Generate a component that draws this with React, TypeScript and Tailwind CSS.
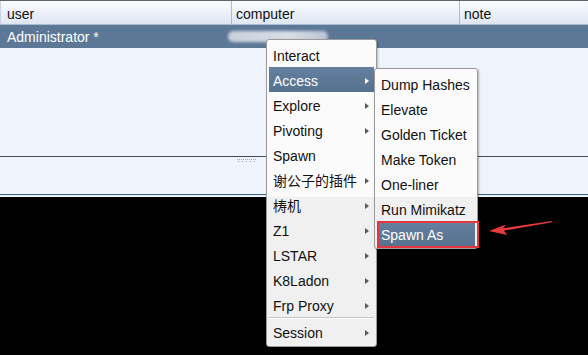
import React from "react";

const Arrow = ({ light }: { light?: boolean }) => (
  <span
    className={
      "ml-auto mr-[5px] h-0 w-0 border-y-[3px] border-l-[4px] border-y-transparent " +
      (light ? "border-l-white" : "border-l-[#5a5a5a]")
    }
  />
);

type Item = { label: string; sub?: boolean; active?: boolean };

const mainItems: Item[] = [
  { label: "Interact" },
  { label: "Access", sub: true, active: true },
  { label: "Explore", sub: true },
  { label: "Pivoting", sub: true },
  { label: "Spawn" },
  { label: "谢公子的插件", sub: true },
  { label: "梼机", sub: true },
  { label: "Z1", sub: true },
  { label: "LSTAR", sub: true },
  { label: "K8Ladon", sub: true },
  { label: "Frp Proxy", sub: true },
];

const subItems: Item[] = [
  { label: "Dump Hashes" },
  { label: "Elevate" },
  { label: "Golden Ticket" },
  { label: "Make Token" },
  { label: "One-liner" },
  { label: "Run Mimikatz" },
  { label: "Spawn As", active: true },
];

const MenuRow = ({ item }: { item: Item }) => (
  <div
    className={
      "flex h-[25px] items-center pl-[4px] pt-[2px] " +
      (item.active ? "bg-[linear-gradient(to_bottom,#6580a0,#57728f)] text-white" : "text-[#111]")
    }
  >
    <span className="whitespace-nowrap">{item.label}</span>
    {item.sub && <Arrow light={item.active} />}
  </div>
);

export default function App() {
  return (
    <div className="relative h-[355px] w-[588px] overflow-hidden bg-black font-['Liberation_Sans','Noto_Sans_CJK_SC',Arial,sans-serif] text-[14px] leading-[16px]">
      {/* top pane */}
      <div className="flex h-[197px] flex-col bg-[#eff3fb]">
        <div className="h-px bg-[#5f6368]" />
        <div className="grid h-[24px] grid-cols-[231px_228px_1fr] border-b border-[#a8bdd4] bg-[linear-gradient(to_bottom,#fafbfe,#dfe7f3)] text-[#111]">
          <div className="flex items-center border-l border-[#c9d5e3] pl-[6px] pt-[2px]">user</div>
          <div className="flex items-center border-l border-[#a8bdd4] pl-[4px] pt-[2px]">computer</div>
          <div className="flex items-center border-l border-[#a8bdd4] pl-[4px] pt-[2px]">note</div>
        </div>
        <div className="grid h-[23px] grid-cols-[228px_1fr] bg-[#5d7897] text-white">
          <div className="flex items-center pl-[7px] pt-[1px]">Administrator *</div>
          <div className="flex items-center">
            <div className="h-[11px] w-[100px] rounded-full bg-[linear-gradient(to_right,#c9d1db,#d8dee6_60%,#b9c4d1)] blur-[1.5px]" />
          </div>
        </div>
        <div className="h-[108px]" />
        <div className="h-px bg-[#4a4a4a]" />
        <div className="relative h-[37px]">
          <svg className="absolute left-[237px] top-[2px]" width="20" height="4" viewBox="0 0 20 4">
            {[0, 4, 8, 12, 16].map((x) => (
              <g key={x} fill="#9aa4b0">
                <rect x={x} y={0} width="1" height="1" />
                <rect x={x + 2} y={0} width="1" height="1" />
                <rect x={x + 1} y={2} width="1" height="1" />
              </g>
            ))}
          </svg>
        </div>
        <div className="h-px bg-[#3b5c7e]" />
        <div className="h-[2px]" />
      </div>

      {/* main context menu */}
      <div className="absolute left-[266px] top-[39px] w-[111px] rounded-[3px] border border-[#9a9a9a] bg-[linear-gradient(to_bottom,#fbfbfb_157px,#f0f0f0_157px)] p-[2px] shadow-[1px_1px_2px_rgba(0,0,0,0.25)]">
        {mainItems.map((it) => (
          <MenuRow key={it.label} item={it} />
        ))}
        <div className="my-[0px] h-[2px] border-t border-[#c4c4c4] bg-white" />
        <MenuRow item={{ label: "Session", sub: true }} />
      </div>

      {/* sub menu */}
      <div className="absolute left-[374px] top-[68px] w-[104px] rounded-[3px] border border-[#9a9a9a] bg-[linear-gradient(to_bottom,#fbfbfb_128px,#f0f0f0_128px)] p-[2px] shadow-[1px_1px_2px_rgba(0,0,0,0.3)]">
        {subItems.map((it) => (
          <MenuRow key={it.label} item={it} />
        ))}
      </div>

      {/* red annotation box */}
      <div className="absolute left-[377px] top-[221px] h-[27px] w-[102px] border-2 border-[#e4363c]" />

      {/* red arrow */}
      <svg className="absolute left-0 top-0" width="588" height="355" viewBox="0 0 588 355">
        <polygon
          points="489,231 506,224.5 503,228.2 552,221 552,222.3 504,230.6 507,235"
          fill="#e8393f"
        />
      </svg>
    </div>
  );
}
